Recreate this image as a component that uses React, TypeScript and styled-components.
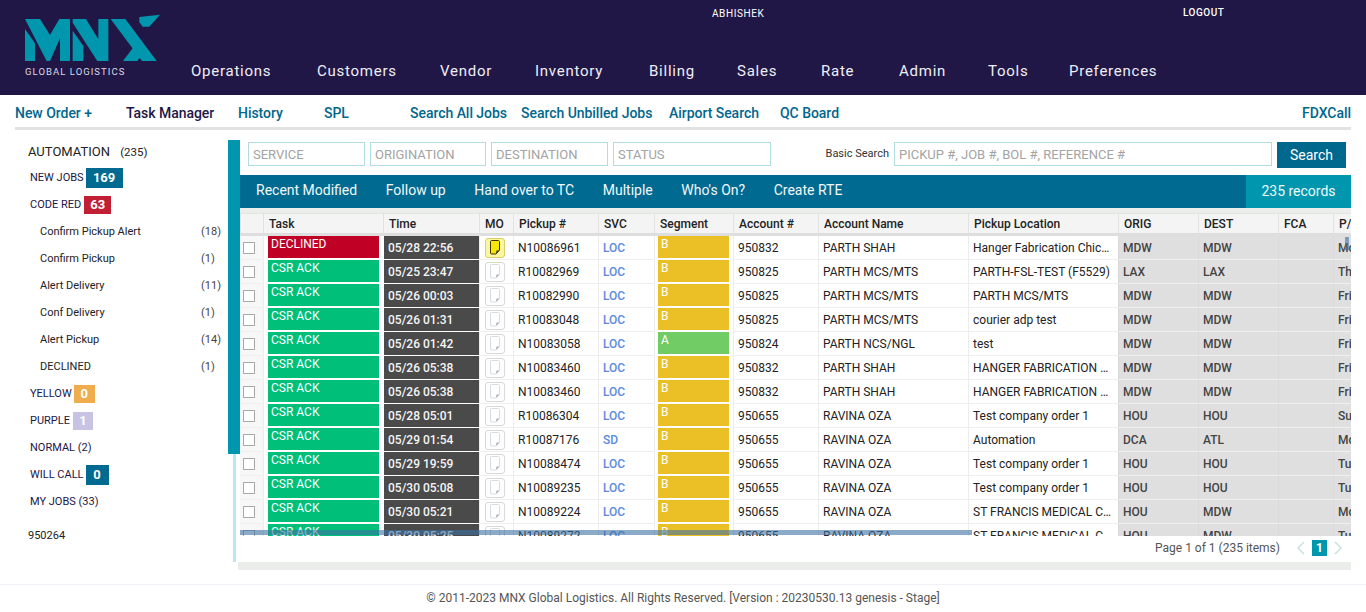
import * as React from 'react';
import styled, { createGlobalStyle } from 'styled-components';

const GlobalStyle = createGlobalStyle`
  html, body {
    margin: 0;
    padding: 0;
    height: 612px;
    overflow: hidden;
    background: #fff;
    font-family: Roboto, "Liberation Sans", sans-serif;
  }
  * { box-sizing: border-box; }
`;

const Header = styled.header`
  height: 95px;
  background: #211747;
  display: flex;
  padding-left: 20px;
`;

const Brand = styled.div`
  width: 171px;
  padding-top: 10px;
`;

const BrandText = styled.div`
  margin: 2px 0 0 5px;
  color: #d9d9e3;
  font-size: 9.5px;
  letter-spacing: 1.05px;
  white-space: nowrap;
  line-height: 12px;
`;

const HeaderRight = styled.div`
  flex: 1;
`;

const UserRow = styled.div`
  height: 59px;
  padding-top: 7px;
  display: flex;
  color: #fff;
  font-size: 10px;
  line-height: 12px;
`;

const UserName = styled.span`
  margin-left: 521px;
  padding-top: 1px;
  width: 471px;
  letter-spacing: 0.6px;
`;

const Logout = styled.span`
  font-weight: 500;
  letter-spacing: 0.5px;
`;

const MainNav = styled.nav`
  display: flex;
  color: #eeeef5;
  font-size: 15px;
  letter-spacing: 0.75px;
  line-height: 24px;
`;

const NavItem = styled.span<{ $w?: number }>`
  width: ${(p) => (p.$w ? `${p.$w}px` : 'auto')};
  white-space: nowrap;
`;

const SubNav = styled.nav`
  height: 35px;
  margin: 0 15px;
  padding-top: 9px;
  border-bottom: 3px solid #e2e2e2;
  display: flex;
  font-size: 14px;
  font-weight: 500;
  letter-spacing: -0.04px;
  line-height: 18px;
`;

const SubLink = styled.a<{ $w?: number; $dark?: boolean; $end?: boolean }>`
  color: ${(p) => (p.$dark ? '#211747' : '#00678d')};
  width: ${(p) => (p.$w ? `${p.$w}px` : 'auto')};
  margin-left: ${(p) => (p.$end ? 'auto' : '0')};
  white-space: nowrap;
`;

const Main = styled.main`
  display: flex;
  padding-top: 10px;
`;

const Sidebar = styled.aside`
  width: 228px;
  padding: 2px 0 0 28px;
  color: #211747;
`;

const SideTitle = styled.div`
  height: 22px;
  font-size: 13px;
  line-height: 20px;
  color: #222;
  span {
    font-size: 11.5px;
    margin-left: 7px;
  }
`;

const SideRow = styled.div`
  height: 27px;
  padding-left: 2px;
  display: flex;
  align-items: center;
  font-size: 11px;
  white-space: nowrap;
`;

const SubRow = styled(SideRow)`
  padding: 0 7px 0 12px;
  justify-content: space-between;
  color: #222;
`;

const Count = styled.span`
  width: 20px;
  color: #444;
`;

const Badge = styled.span<{ $bg: string; $w: number; $h?: number; $ml?: number }>`
  width: ${(p) => p.$w}px;
  height: ${(p) => p.$h ?? 18}px;
  margin-left: ${(p) => p.$ml ?? 3}px;
  margin-top: 1px;
  background: ${(p) => p.$bg};
  color: #fff;
  font-size: 13px;
  font-weight: 700;
  line-height: ${(p) => p.$h ?? 18}px;
  text-align: center;
`;

const SideFoot = styled.div`
  margin-top: 11px;
  font-size: 11px;
  color: #222;
  line-height: 20px;
`;

const Rail = styled.div`
  width: 12px;
  flex: none;
`;

const RailThick = styled.div`
  height: 314px;
  background: #0097ae;
`;

const RailThin = styled.div`
  width: 3px;
  height: 108px;
  margin-left: 5px;
  background: #bfe5f2;
`;

const Content = styled.section`
  width: 1111px;
  flex: none;
`;

const SearchBar = styled.div`
  height: 35px;
  padding: 2px 5px 0 8px;
  display: flex;
  gap: 5px;
`;

const Field = styled.input<{ $w: number }>`
  width: ${(p) => p.$w}px;
  height: 24px;
  padding: 1px 4px 0;
  border: 1px solid #b3dbe2;
  border-radius: 0;
  outline: none;
  font-family: inherit;
  font-size: 13px;
  &::placeholder {
    color: #a3a3a3;
    opacity: 1;
  }
`;

const BasicLabel = styled.label`
  margin-left: auto;
  font-size: 11px;
  line-height: 24px;
  color: #333;
`;

const SearchButton = styled.button`
  width: 69px;
  height: 26px;
  padding: 0;
  border: 0;
  background: #00678d;
  color: #fff;
  font-family: inherit;
  font-size: 14px;
  line-height: 24px;
`;

const ToolBar = styled.div`
  height: 33px;
  background: #006a91;
  display: flex;
  gap: 28.6px;
  padding-left: 16px;
  color: #f2f8fa;
  font-size: 14px;
  line-height: 30px;
`;

const Records = styled.div`
  margin-left: auto;
  width: 105px;
  height: 33px;
  background: #0097ae;
  text-align: center;
  line-height: 33px;
`;

const Grid = styled.div`
  position: relative;
  height: 328px;
  padding-top: 5px;
  background: #eceeec;
  overflow: hidden;
`;

const Table = styled.table`
  width: 1153px;
  table-layout: fixed;
  border-collapse: separate;
  border-spacing: 0;
  background: #fff;
  font-size: 12px;
  color: #222;
`;

const Th = styled.th`
  height: 23px;
  padding: 0 0 0 5px;
  background: #f4f4f4;
  border-top: 1px solid #e4e4e4;
  border-left: 1px solid #e2e2e2;
  border-bottom: 3px solid #dedede;
  font-weight: 500;
  text-align: left;
  color: #222;
  white-space: nowrap;
  overflow: hidden;
`;

const Td = styled.td`
  height: 24px;
  padding: 0 0 0 4px;
  border-left: 1px solid #ececec;
  border-bottom: 1px solid #eeeeee;
  white-space: nowrap;
  overflow: hidden;
  text-overflow: ellipsis;
`;

const LocationCell = styled(Td)`
  padding-right: 7px;
`;

const CheckCell = styled(Td)`
  padding: 0 0 0 3px;
  background: #f7f7f7;
  border-left: 0;
`;

const Check = styled.span`
  display: block;
  width: 12px;
  height: 12px;
  margin-top: 1px;
  border: 1px solid #a9a9a9;
  background: #fff;
`;

const FillCell = styled(Td)`
  padding: 0 4px 1px 4px;
  border-bottom: 1px solid #fff;
`;

const SegmentCell = styled(FillCell)`
  padding-left: 3px;
`;

const Fill = styled.div<{ $bg: string }>`
  height: 22px;
  padding: 0 3px;
  background: ${(p) => p.$bg};
  color: #fff;
  line-height: 16px;
  font-size: 12px;
`;

const TimeCell = styled(Td)`
  padding: 0 0 0 4px;
  background: #4a4a4a;
  border-left: 1px solid #fff;
  border-bottom: 1px solid #fff;
  color: #f5f5f5;
  font-size: 12px;
  font-weight: 500;
`;

const NoteCell = styled(Td)`
  padding: 0 0 0 5px;
`;

const NoteBox = styled.span<{ $on?: boolean }>`
  display: flex;
  align-items: center;
  justify-content: center;
  width: 20px;
  height: 20px;
  border: 1px solid ${(p) => (p.$on ? '#d9cf6a' : '#d8d8d8')};
  border-radius: 3px;
  background: ${(p) => (p.$on ? '#fdf6a0' : '#fff')};
`;

const SvcCell = styled(Td)`
  color: #5a8ade;
  font-weight: 500;
`;

const GreyCell = styled(Td)`
  background: #dfdfdf;
  border-left: 1px solid #dadada;
  border-bottom: 1px solid #f0f0f0;
  color: #444;
  font-weight: 500;
`;

const ScrollX = styled.div`
  position: absolute;
  left: 0;
  bottom: 1px;
  width: 732px;
  height: 5px;
  background: rgba(62, 113, 163, 0.6);
`;

const ScrollY = styled.div`
  position: absolute;
  right: 2px;
  top: 29px;
  width: 4px;
  height: 13px;
  background: rgba(62, 113, 163, 0.6);
`;

const Pager = styled.div`
  height: 26px;
  padding: 0 8px 2px 0;
  display: flex;
  align-items: center;
  justify-content: flex-end;
  color: #555;
  font-size: 12px;
`;

const PageArrow = styled.svg`
  display: block;
`;

const PageNumber = styled.span`
  width: 15px;
  height: 16px;
  margin: 0 7px;
  background: #0097ae;
  color: #fff;
  font-weight: 700;
  text-align: center;
  line-height: 16px;
`;

const PagerText = styled.span`
  margin-right: 16px;
`;

const BottomStrip = styled.div`
  height: 8px;
  margin-left: -2px;
  background: #ebedeb;
`;

const Footer = styled.footer`
  margin-top: 14px;
  height: 28px;
  border-top: 1px solid #f0f0f6;
  text-align: center;
  color: #555;
  font-size: 12px;
  line-height: 26px;
`;

const columns = [23, 120, 96, 34, 85, 56, 79, 85, 150, 150, 80, 80, 55, 60];
const headings = ['', 'Task', 'Time', 'MO', 'Pickup #', 'SVC', 'Segment', 'Account #', 'Account Name', 'Pickup Location', 'ORIG', 'DEST', 'FCA', 'P/U'];

const navItems: [string, number?][] = [
  ['Operations', 126],
  ['Customers', 123],
  ['Vendor', 95],
  ['Inventory', 114],
  ['Billing', 88],
  ['Sales', 84],
  ['Rate', 78],
  ['Admin', 89],
  ['Tools', 81],
  ['Preferences'],
];

type Row = {
  task: string;
  time: string;
  pickup: string;
  svc: string;
  seg: string;
  acct: string;
  name: string;
  loc: string;
  orig: string;
  dest: string;
  day: string;
};

const hanger = 'HANGER FABRICATION CHICAGO';
const francis = 'ST FRANCIS MEDICAL CENTER';

const rows: Row[] = [
  { task: 'DECLINED', time: '05/28 22:56', pickup: 'N10086961', svc: 'LOC', seg: 'B', acct: '950832', name: 'PARTH SHAH', loc: 'Hanger Fabrication Chicago', orig: 'MDW', dest: 'MDW', day: 'Mon' },
  { task: 'CSR ACK', time: '05/25 23:47', pickup: 'R10082969', svc: 'LOC', seg: 'B', acct: '950825', name: 'PARTH MCS/MTS', loc: 'PARTH-FSL-TEST (F5529)', orig: 'LAX', dest: 'LAX', day: 'Thu' },
  { task: 'CSR ACK', time: '05/26 00:03', pickup: 'R10082990', svc: 'LOC', seg: 'B', acct: '950825', name: 'PARTH MCS/MTS', loc: 'PARTH MCS/MTS', orig: 'MDW', dest: 'MDW', day: 'Fri' },
  { task: 'CSR ACK', time: '05/26 01:31', pickup: 'R10083048', svc: 'LOC', seg: 'B', acct: '950825', name: 'PARTH MCS/MTS', loc: 'courier adp test', orig: 'MDW', dest: 'MDW', day: 'Fri' },
  { task: 'CSR ACK', time: '05/26 01:42', pickup: 'N10083058', svc: 'LOC', seg: 'A', acct: '950824', name: 'PARTH NCS/NGL', loc: 'test', orig: 'MDW', dest: 'MDW', day: 'Fri' },
  { task: 'CSR ACK', time: '05/26 05:38', pickup: 'N10083460', svc: 'LOC', seg: 'B', acct: '950832', name: 'PARTH SHAH', loc: hanger, orig: 'MDW', dest: 'MDW', day: 'Fri' },
  { task: 'CSR ACK', time: '05/26 05:38', pickup: 'N10083460', svc: 'LOC', seg: 'B', acct: '950832', name: 'PARTH SHAH', loc: hanger, orig: 'MDW', dest: 'MDW', day: 'Fri' },
  { task: 'CSR ACK', time: '05/28 05:01', pickup: 'R10086304', svc: 'LOC', seg: 'B', acct: '950655', name: 'RAVINA OZA', loc: 'Test company order 1', orig: 'HOU', dest: 'HOU', day: 'Sun' },
  { task: 'CSR ACK', time: '05/29 01:54', pickup: 'R10087176', svc: 'SD', seg: 'B', acct: '950655', name: 'RAVINA OZA', loc: 'Automation', orig: 'DCA', dest: 'ATL', day: 'Mon' },
  { task: 'CSR ACK', time: '05/29 19:59', pickup: 'N10088474', svc: 'LOC', seg: 'B', acct: '950655', name: 'RAVINA OZA', loc: 'Test company order 1', orig: 'HOU', dest: 'HOU', day: 'Tue' },
  { task: 'CSR ACK', time: '05/30 05:08', pickup: 'N10089235', svc: 'LOC', seg: 'B', acct: '950655', name: 'RAVINA OZA', loc: 'Test company order 1', orig: 'HOU', dest: 'HOU', day: 'Tue' },
  { task: 'CSR ACK', time: '05/30 05:21', pickup: 'N10089224', svc: 'LOC', seg: 'B', acct: '950655', name: 'RAVINA OZA', loc: francis, orig: 'HOU', dest: 'MDW', day: 'Mon' },
  { task: 'CSR ACK', time: '05/30 05:25', pickup: 'N10089272', svc: 'LOC', seg: 'B', acct: '950655', name: 'RAVINA OZA', loc: francis, orig: 'HOU', dest: 'MDW', day: 'Tue' },
];

function Logo() {
  return (
    <svg width="145" height="54" viewBox="0 0 435 162" style={{ display: 'block' }}>
      <g fill="#0097ae">
        <polygon points="15,57 45,100 45,153 15,153" />
        <polygon points="15,27 60,27 90,75 118,27 150,27 150,153 120,153 120,85 90,153 80,153" />
        <polygon points="158,62 190,108 190,153 158,153" />
        <polygon points="158,27 198,27 235,88 235,27 265,27 265,153 232,153 158,38" />
        <polygon points="272,27 316,27 410,153 366,153" />
        <polygon points="309,153 343,108 365,136 352,153" />
        <polygon points="358,21 420,14 388,50 368,50 358,36" />
      </g>
    </svg>
  );
}

function NoteIcon({ on }: { on?: boolean }) {
  const stroke = on ? '#3a3400' : '#d6dce3';
  const fill = on ? '#f6e600' : '#fff';
  return (
    <svg width="12" height="15" viewBox="0 0 12 15">
      <path d="M1.5 1.5c0-.5.5-1 1-1h7c.5 0 1 .5 1 1v8.5l-3.5 4h-4.5c-.5 0-1-.5-1-1z" fill={fill} stroke={stroke} strokeWidth="1" />
      <path d="M7 14l.5-3.5h3z" fill={on ? '#3a3400' : '#a8b0b9'} />
    </svg>
  );
}

function App() {
  return (
    <>
      <GlobalStyle />
      <Header>
        <Brand>
          <Logo />
          <BrandText>GLOBAL LOGISTICS</BrandText>
        </Brand>
        <HeaderRight>
          <UserRow>
            <UserName>ABHISHEK</UserName>
            <Logout>LOGOUT</Logout>
          </UserRow>
          <MainNav>
            {navItems.map(([item, w]) => (
              <NavItem key={item} $w={w}>{item}</NavItem>
            ))}
          </MainNav>
        </HeaderRight>
      </Header>

      <SubNav>
        <SubLink $w={111}>New Order +</SubLink>
        <SubLink $w={112} $dark>Task Manager</SubLink>
        <SubLink $w={86}>History</SubLink>
        <SubLink $w={86}>SPL</SubLink>
        <SubLink $w={111}>Search All Jobs</SubLink>
        <SubLink $w={148}>Search Unbilled Jobs</SubLink>
        <SubLink $w={111}>Airport Search</SubLink>
        <SubLink>QC Board</SubLink>
        <SubLink $end>FDXCall</SubLink>
      </SubNav>

      <Main>
        <Sidebar>
          <SideTitle>AUTOMATION <span>(235)</span></SideTitle>
          <SideRow>NEW JOBS <Badge $bg="#006a91" $w={37} $h={20} $ml={2}>169</Badge></SideRow>
          <SideRow>CODE RED <Badge $bg="#c11f34" $w={27}>63</Badge></SideRow>
          <SubRow>Confirm Pickup Alert <Count>(18)</Count></SubRow>
          <SubRow>Confirm Pickup <Count>(1)</Count></SubRow>
          <SubRow>Alert Delivery <Count>(11)</Count></SubRow>
          <SubRow>Conf Delivery <Count>(1)</Count></SubRow>
          <SubRow>Alert Pickup <Count>(14)</Count></SubRow>
          <SubRow>DECLINED <Count>(1)</Count></SubRow>
          <SideRow>YELLOW <Badge $bg="#f0ad4e" $w={21} $ml={2}>0</Badge></SideRow>
          <SideRow>PURPLE <Badge $bg="#c9c3e3" $w={20}>1</Badge></SideRow>
          <SideRow>NORMAL (2)</SideRow>
          <SideRow>WILL CALL <Badge $bg="#006a91" $w={23} $h={20} $ml={2}>0</Badge></SideRow>
          <SideRow>MY JOBS (33)</SideRow>
          <SideFoot>950264</SideFoot>
        </Sidebar>

        <Rail>
          <RailThick />
          <RailThin />
        </Rail>

        <Content>
          <SearchBar>
            <Field $w={117} placeholder="SERVICE" />
            <Field $w={116} placeholder="ORIGINATION" />
            <Field $w={117} placeholder="DESTINATION" />
            <Field $w={158} placeholder="STATUS" />
            <BasicLabel>Basic Search</BasicLabel>
            <Field $w={378} placeholder="PICKUP #, JOB #, BOL #, REFERENCE #" />
            <SearchButton>Search</SearchButton>
          </SearchBar>

          <ToolBar>
            <span>Recent Modified</span>
            <span>Follow up</span>
            <span>Hand over to TC</span>
            <span>Multiple</span>
            <span>Who's On?</span>
            <span>Create RTE</span>
            <Records>235 records</Records>
          </ToolBar>

          <Grid>
            <Table>
              <colgroup>
                {columns.map((w, i) => (
                  <col key={i} width={w} />
                ))}
              </colgroup>
              <thead>
                <tr>
                  {headings.map((h, i) => (
                    <Th key={i}>{h}</Th>
                  ))}
                </tr>
              </thead>
              <tbody>
                {rows.map((r, i) => (
                  <tr key={i}>
                    <CheckCell><Check /></CheckCell>
                    <FillCell>
                      <Fill $bg={r.task === 'DECLINED' ? '#c00024' : '#00bf78'}>{r.task}</Fill>
                    </FillCell>
                    <TimeCell>{r.time}</TimeCell>
                    <NoteCell>
                      <NoteBox $on={i === 0}><NoteIcon on={i === 0} /></NoteBox>
                    </NoteCell>
                    <Td>{r.pickup}</Td>
                    <SvcCell>{r.svc}</SvcCell>
                    <SegmentCell>
                      <Fill $bg={r.seg === 'A' ? '#72cc66' : '#ebc026'}>{r.seg}</Fill>
                    </SegmentCell>
                    <Td>{r.acct}</Td>
                    <Td>{r.name}</Td>
                    <LocationCell>{r.loc}</LocationCell>
                    <GreyCell>{r.orig}</GreyCell>
                    <GreyCell>{r.dest}</GreyCell>
                    <GreyCell />
                    <GreyCell>{r.day}</GreyCell>
                  </tr>
                ))}
              </tbody>
            </Table>
            <ScrollX />
            <ScrollY />
          </Grid>

          <Pager>
            <PagerText>Page 1 of 1 (235 items)</PagerText>
            <PageArrow width="9" height="14" viewBox="0 0 9 14">
              <path d="M8 1L2 7l6 6" fill="none" stroke="#c5dfe8" strokeWidth="1.4" />
            </PageArrow>
            <PageNumber>1</PageNumber>
            <PageArrow width="9" height="14" viewBox="0 0 9 14">
              <path d="M1 1l6 6-6 6" fill="none" stroke="#c5dfe8" strokeWidth="1.4" />
            </PageArrow>
          </Pager>
          <BottomStrip />
        </Content>
      </Main>

      <Footer>© 2011-2023 MNX Global Logistics. All Rights Reserved. [Version : 20230530.13 genesis - Stage]</Footer>
    </>
  );
}

export default App;
